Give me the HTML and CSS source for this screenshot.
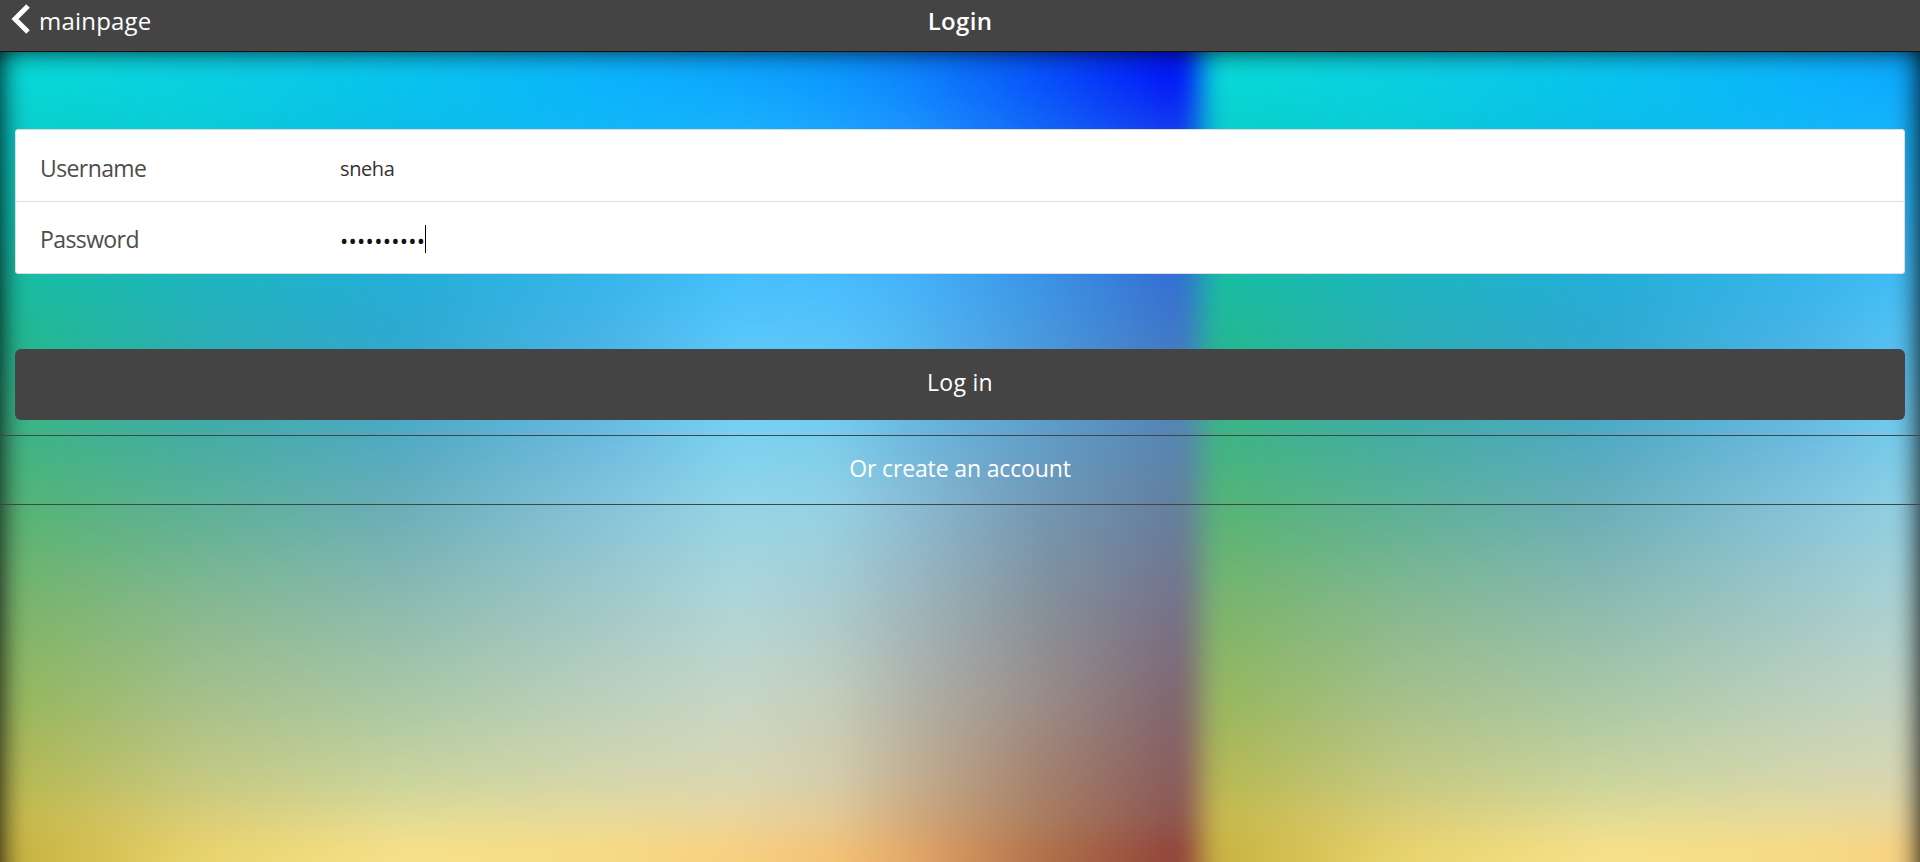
FILE: index.html
```html
<!DOCTYPE html>
<html lang="en">
<head>
<meta charset="utf-8">
<title>Login</title>
<link rel="stylesheet" href="styles.css">
</head>
<body>
<div class="page">
  <div class="backdrop" aria-hidden="true">
    <div class="band band-1"></div>
    <div class="band band-2"></div>
    <div class="band band-3"></div>
    <div class="band band-4"></div>
    <div class="band band-5"></div>
    <div class="band band-6"></div>
    <div class="band band-7"></div>
    <div class="band band-8"></div>
    <div class="band band-9"></div>
    <div class="band band-10"></div>
    <div class="band band-11"></div>
  </div>
  <div class="content">
    <header class="bar">
      <a class="back">
        <svg class="chevron" width="20" height="32" viewBox="0 0 20 32"><path d="M18 3 5 16 18 29" fill="none" stroke="#fff" stroke-width="5"/></svg>
        <span class="back-text">mainpage</span>
      </a>
      <h1 class="title">Login</h1>
      <span></span>
    </header>
    <main>
      <div class="card">
        <div class="row"><label class="label">Username</label><span class="value">sneha</span></div>
        <div class="row"><label class="label">Password</label><span class="value dots">••••••••••</span><span class="caret"></span></div>
      </div>
      <button class="login">Log in</button>
      <a class="create">Or create an account</a>
    </main>
  </div>
</div>
</body>
</html>
```
FILE: styles.css
```css
* { box-sizing: border-box; }
body {
  margin: 0;
  font-family: "Open Sans", "Noto Sans", sans-serif;
  color: #fff;
}
.page {
  position: relative;
  height: 862px;
  overflow: hidden;
  background: #000;
}

/* Blurred colour mesh, tiled every 1200px; each band fades in over the one above it */
.backdrop {
  position: absolute;
  top: 48px;
  left: 0;
  width: 100%;
  height: 870px;
  filter: blur(14px);
}
.band {
  position: absolute;
  inset: 0;
  background-image: linear-gradient(90deg, var(--a) 30px, var(--b) 200px, var(--c) 400px, var(--d) 600px, var(--e) 740px, var(--m) 830px, var(--f) 910px, var(--g) 1040px, var(--h) 1175px);
  background-size: 1200px 100%;
  background-repeat: repeat-x;
}
.band:not(.band-1) {
  -webkit-mask-image: linear-gradient(180deg, transparent var(--from), #000 var(--to));
  mask-image: linear-gradient(180deg, transparent var(--from), #000 var(--to));
}
.band-1 { --a:#08dbd9; --b:#0acfe3; --c:#09c5ef; --d:#0bb3fd; --e:#0ba4ff; --m:#0a98fe; --f:#0b82fc; --g:#0650fb; --h:#0012f8; }
.band-2 { --from:24px; --to:79px; --a:#0acfcc; --b:#0accd8; --c:#0bbee8; --d:#10b8f8; --e:#1ab0fc; --m:#1ba4fe; --f:#1b92fd; --g:#1265f8; --h:#1338ef; }
.band-3 { --from:79px; --to:229px; --a:#18bda4; --b:#1db5bf; --c:#24aed8; --d:#36b6ea; --e:#47c0fc; --m:#48beff; --f:#46b3fa; --g:#3b96e6; --h:#356fd4; }
.band-4 { --from:229px; --to:299px; --a:#24b890; --b:#2cadb5; --c:#30a8cf; --d:#4ab3e5; --e:#5bc8f9; --m:#5bc5f8; --f:#54b8f0; --g:#4a98dc; --h:#4278c4; }
.band-5 { --from:299px; --to:379px; --a:#3db487; --b:#42aca5; --c:#4ea9c5; --d:#68b9e0; --e:#78d2f3; --m:#77cdee; --f:#6ab8e0; --g:#5f9fcb; --h:#5585b3; }
.band-6 { --from:379px; --to:459px; --a:#55b477; --b:#5cb197; --c:#6aaeb9; --d:#84c3da; --e:#94d5e6; --m:#94d2e4; --f:#8bbcd4; --g:#7398b3; --h:#647f9e; }
.band-7 { --from:459px; --to:554px; --a:#7ab56e; --b:#85b890; --c:#8cbab0; --d:#a0c8c8; --e:#afd6d9; --m:#aaccd0; --f:#9fb7bd; --g:#86929c; --h:#75728a; }
.band-8 { --from:554px; --to:654px; --a:#98b860; --b:#a7c08b; --c:#aac8a5; --d:#bcd0bc; --e:#c8d6c5; --m:#c5cebb; --f:#b2b3a8; --g:#9b8d88; --h:#80666f; }
.band-9 { --from:654px; --to:734px; --a:#b8b956; --b:#c4c982; --c:#cad49d; --d:#d4d6ac; --e:#dad7b3; --m:#d5cdab; --f:#c4b091; --g:#a5816d; --h:#895c5c; }
.band-10 { --from:734px; --to:774px; --a:#c9bb4e; --b:#dccd77; --c:#e4dc94; --d:#eadb98; --e:#ebd49b; --m:#e6ca95; --f:#d2aa7b; --g:#ab7e5f; --h:#8e5450; }
.band-11 { --from:774px; --to:804px; --a:#c9b442; --b:#e9d46c; --c:#f8e188; --d:#f8db82; --e:#f9cf7d; --m:#f4c375; --f:#e5a867; --g:#b2714a; --h:#904338; }

.content { position: relative; }
.bar {
  height: 52px;
  display: grid;
  grid-template-columns: 1fr auto 1fr;
  background: #444;
  border-bottom: 1px solid #111;
}
.back { display: flex; padding-left: 10px; }
.chevron { margin-top: 3px; margin-right: 9px; }
.back-text { font-size: 24px; line-height: 42px; letter-spacing: .2px; }
.title { margin: 0; font-size: 24px; font-weight: 600; line-height: 42px; letter-spacing: .3px; }

.card {
  margin: 77px 15px 0;
  height: 145px;
  background: #fff;
  border: 1px solid #ddd;
  border-radius: 3px;
}
.row { height: 71px; display: flex; align-items: center; padding: 4px 0 0 24px; }
.row + .row { height: 72px; padding-top: 3px; border-top: 1px solid #ddd; }
.label { width: 300px; font-size: 23px; color: #4d4d4d; letter-spacing: -.6px; }
.value { font-size: 20px; color: #333; letter-spacing: -.4px; padding-top: 1px; }
.dots { padding-top: 1px; font-size: 22px; color: #111; letter-spacing: .27px; }
.caret { width: 1px; height: 28px; background: #000; }

.login,
.create {
  display: flex;
  align-items: center;
  justify-content: center;
  color: #fff;
  font: 23px "Open Sans", "Noto Sans", sans-serif;
}
.login {
  width: 1890px;
  height: 71px;
  margin: 75px 15px 0;
  padding: 0 0 5px;
  border: 0;
  border-radius: 6px;
  background: #444;
  letter-spacing: .3px;
}
.create {
  height: 70px;
  margin-top: 15px;
  padding-bottom: 5px;
  border: solid #444;
  border-width: 1px 0;
  letter-spacing: -.15px;
}
```
